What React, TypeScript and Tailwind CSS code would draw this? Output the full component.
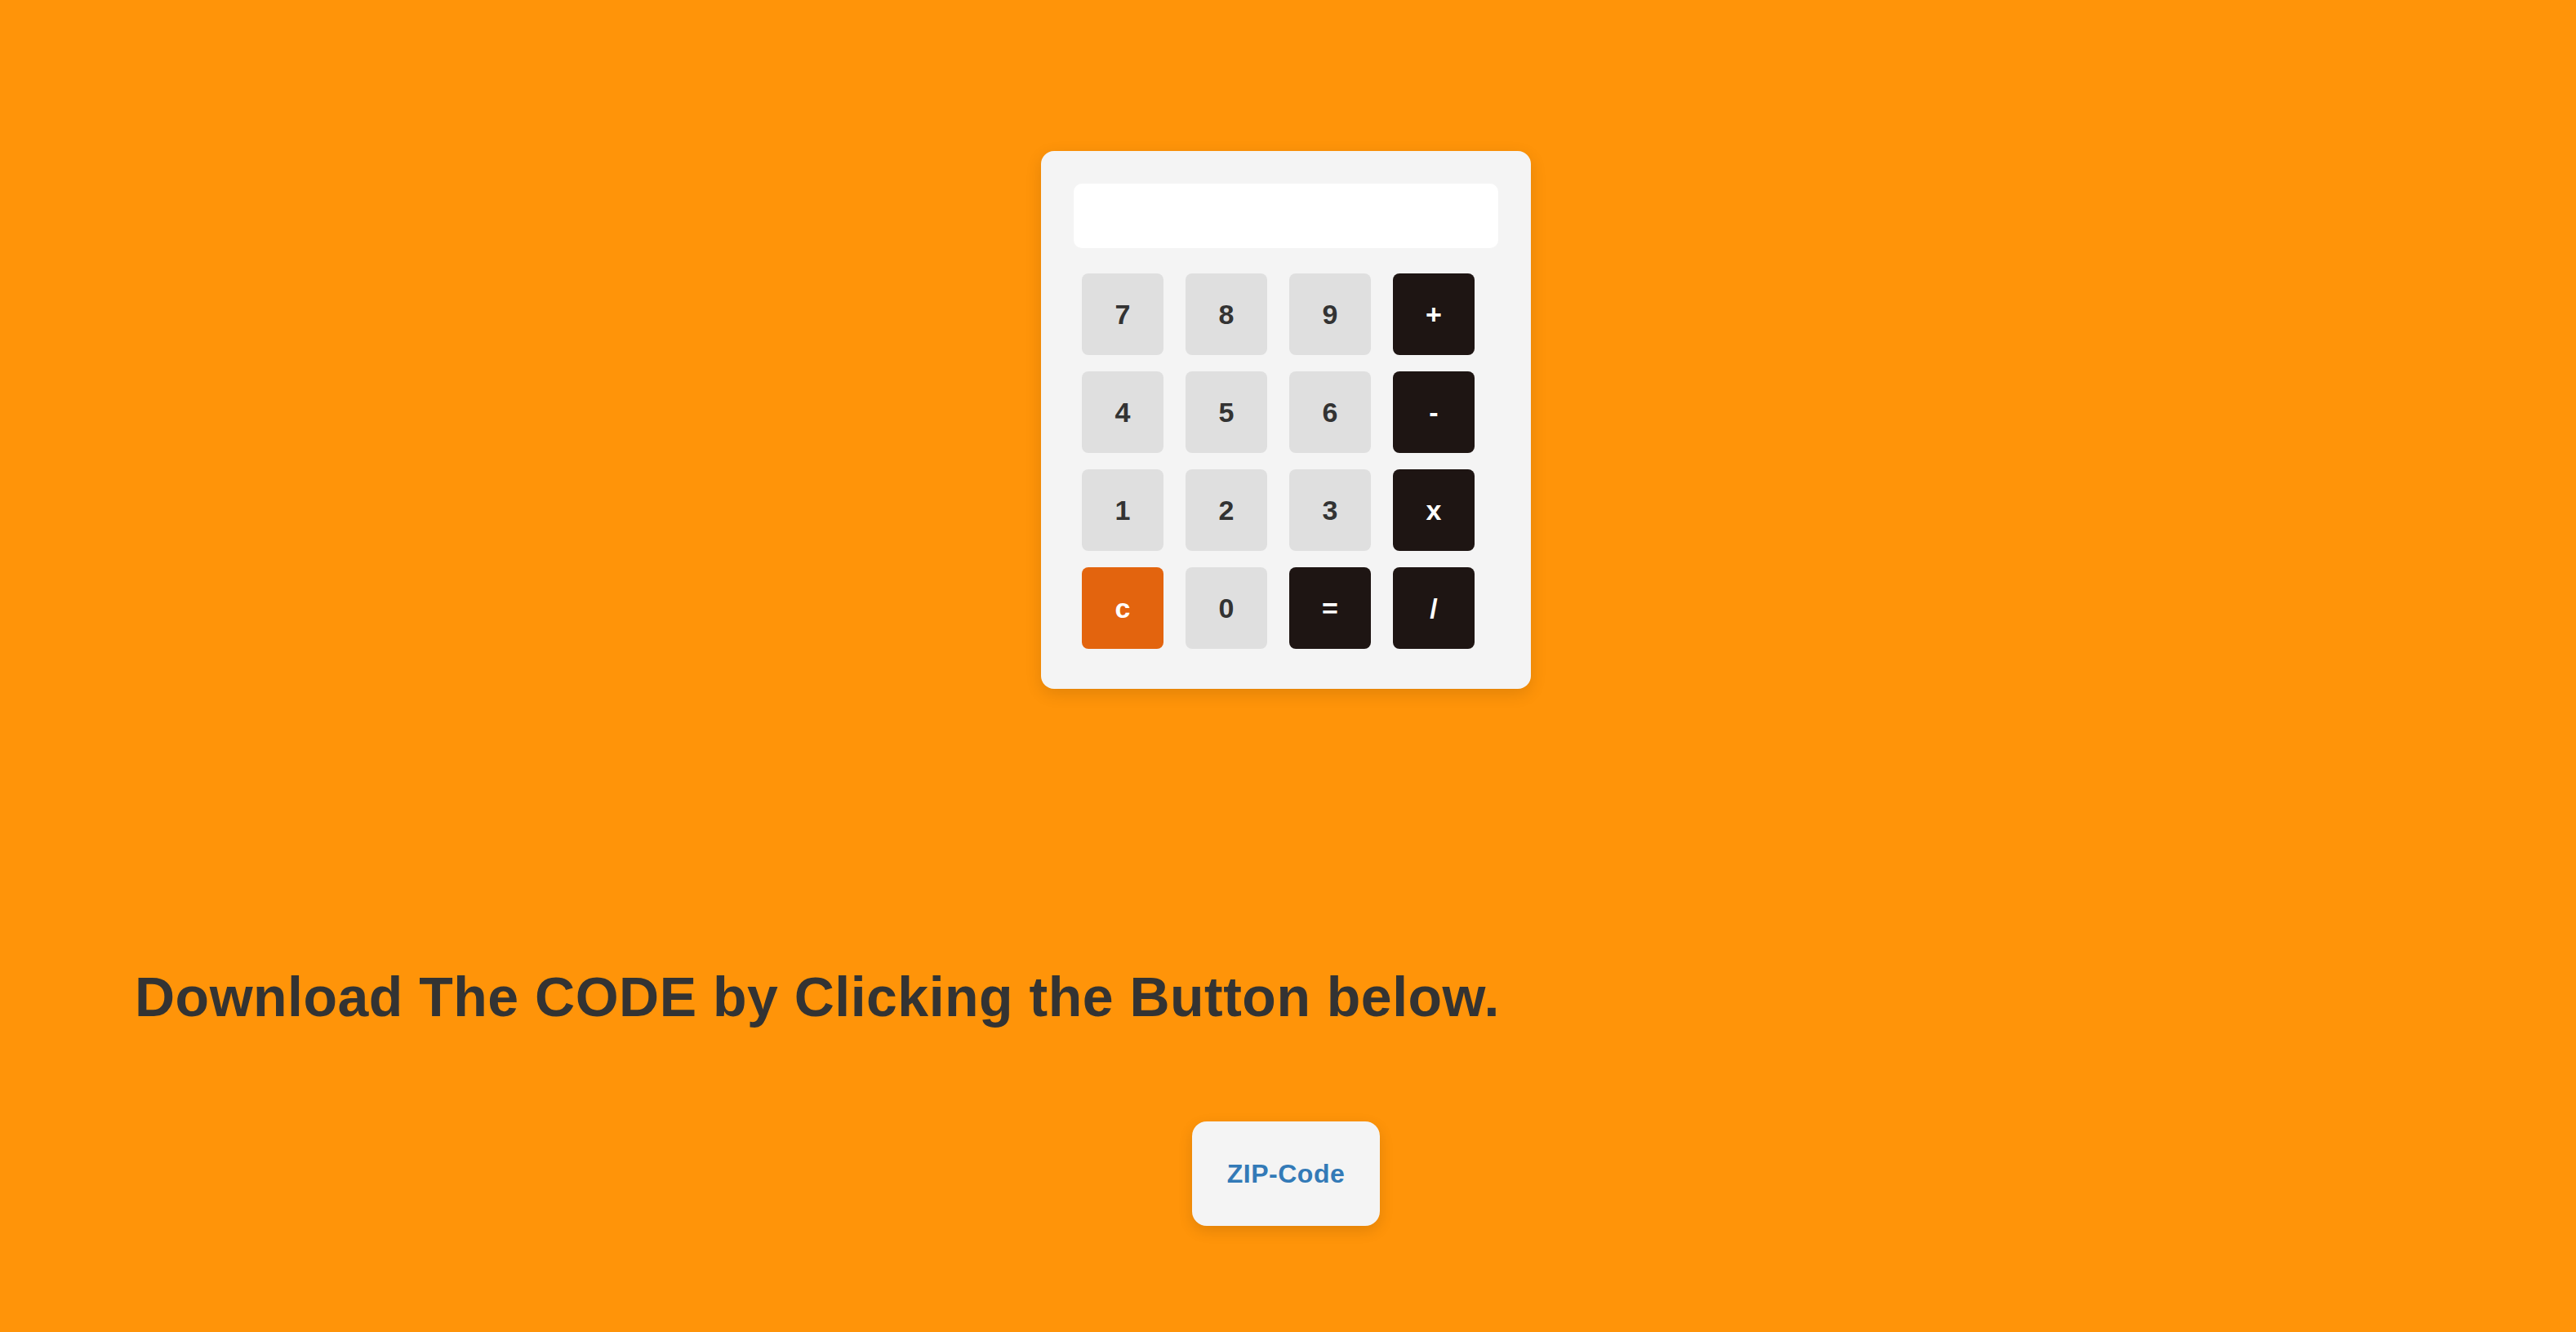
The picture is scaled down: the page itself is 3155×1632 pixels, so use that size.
import React from "react";

type Key = { label: string; kind: "num" | "op" | "clear" };

const keys: Key[] = [
  { label: "7", kind: "num" },
  { label: "8", kind: "num" },
  { label: "9", kind: "num" },
  { label: "+", kind: "op" },
  { label: "4", kind: "num" },
  { label: "5", kind: "num" },
  { label: "6", kind: "num" },
  { label: "-", kind: "op" },
  { label: "1", kind: "num" },
  { label: "2", kind: "num" },
  { label: "3", kind: "num" },
  { label: "x", kind: "op" },
  { label: "c", kind: "clear" },
  { label: "0", kind: "num" },
  { label: "=", kind: "op" },
  { label: "/", kind: "op" },
];

function keyClass(kind: Key["kind"]) {
  if (kind === "num") return "bg-[#dfdfdf] text-[#333333]";
  if (kind === "op") return "bg-[#1e1513] text-white";
  return "bg-[#e3640e] text-white";
}

export default function App() {
  return (
    <div
      className="min-h-[1632px] w-full bg-[#ff9409] flex flex-col pt-[185px]"
      style={{ fontFamily: '"Liberation Sans", Arial, sans-serif' }}
    >
      <div className="self-center mr-[5px] w-[600px] bg-[#f4f4f4] rounded-[16px] shadow-[0_6px_20px_rgba(0,0,0,0.12)] pt-[40px] px-[40px] pb-[49px] flex flex-col">
        <div className="w-[520px] h-[79px] bg-white rounded-[10px]" />
        <div className="mt-[31px] ml-[10px] grid grid-cols-[repeat(4,100px)] gap-x-[27px] gap-y-[20px]">
          {keys.map((k) => (
            <div
              key={k.label}
              className={`w-[100px] h-[100px] rounded-[8px] flex items-center justify-center text-[34px] font-bold leading-none ${keyClass(k.kind)}`}
            >
              {k.label}
            </div>
          ))}
        </div>
      </div>

      <h1 className="mt-[343px] pl-[165px] text-[68px] leading-none font-bold text-[#333333] whitespace-nowrap tracking-[0.5px]">
        Download The CODE by Clicking the Button below.
      </h1>

      <div className="self-center mr-[5px] mt-[119px] w-[230px] h-[128px] bg-[#f4f4f4] rounded-[18px] shadow-[0_6px_18px_rgba(0,0,0,0.12)] flex items-center justify-center">
        <span className="text-[32px] font-bold text-[#337ab7] leading-none tracking-[0.5px]">
          ZIP-Code
        </span>
      </div>
    </div>
  );
}
